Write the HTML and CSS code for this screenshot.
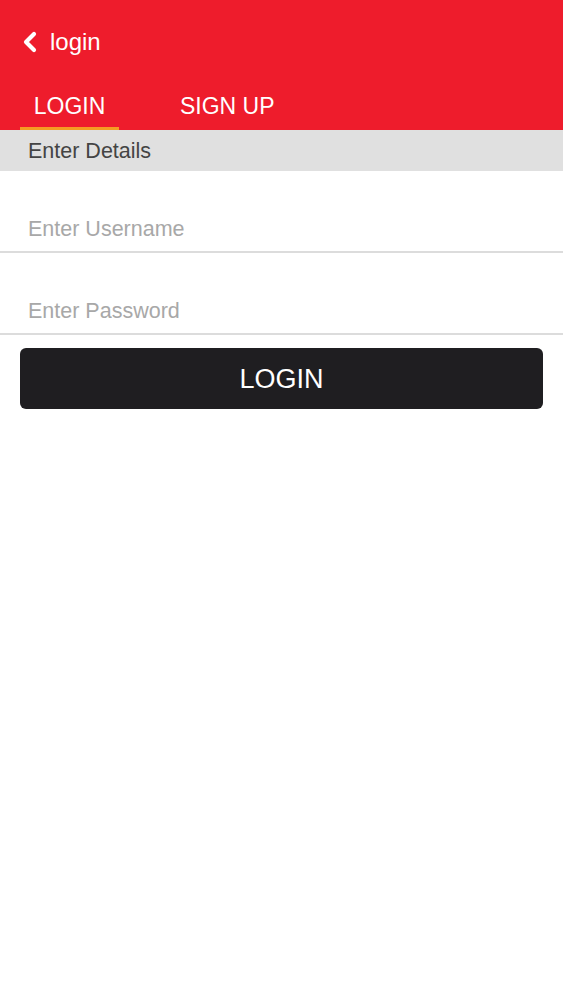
FILE: index.html
```html
<!DOCTYPE html>
<html lang="en">
<head>
    <meta charset="UTF-8">
    <meta name="viewport" content="width=device-width, initial-scale=1.0">
    <title>login</title>
    <link rel="stylesheet" href="styles.css">
</head>
<body>
    <div class="header">
        <div class="topbar">
            <svg class="back" width="16" height="22" viewBox="0 0 16 22">
                <path d="M12 3 L4 11 L12 19" fill="none" stroke="#fff" stroke-width="4.2" stroke-linecap="round" stroke-linejoin="round"/>
            </svg>
            <span class="title">login</span>
        </div>
        <div class="tabs">
            <div class="tab active">LOGIN</div>
            <div class="tab">SIGN UP</div>
        </div>
    </div>

    <div class="section">Enter Details</div>

    <div class="field">
        <input type="text" placeholder="Enter Username">
    </div>
    <div class="field">
        <input type="password" placeholder="Enter Password">
    </div>

    <div class="actions">
        <button class="login-btn">LOGIN</button>
    </div>
</body>
</html>
```

FILE: styles.css
```css
body {
    font-family: "Liberation Sans", Arial, sans-serif;
    background-color: #fff;
    margin: 0;
    padding: 0;
}

.header {
    background-color: #ee1c2c;
    color: #fff;
    height: 130px;
}

.topbar {
    height: 84px;
    display: flex;
    align-items: center;
    padding-left: 22px;
}

.back {
    margin-right: 12px;
}

.title {
    font-size: 24px;
}

.tabs {
    display: flex;
    padding-left: 20px;
    height: 46px;
}

.tab {
    font-size: 23px;
    line-height: 45px;
    height: 43px;
    text-align: center;
    border-bottom: 3px solid transparent;
}

.tab:first-child {
    width: 99px;
}

.tab:last-child {
    margin-left: 61px;
}

.tab.active {
    border-bottom-color: #f59b23;
}

.section {
    background-color: #e0e0e0;
    color: #444;
    font-size: 21.5px;
    height: 41px;
    line-height: 43px;
    padding-left: 28px;
}

.field {
    height: 80px;
    border-bottom: 2px solid #dcdcdc;
    display: flex;
    align-items: flex-end;
}

.field input {
    border: none;
    outline: none;
    width: 100%;
    font-family: inherit;
    font-size: 21.5px;
    padding: 0 28px 4px;
    height: 36px;
    color: #333;
    background: transparent;
}

.field input::placeholder {
    color: #a8a8a8;
}

.actions {
    padding: 13px 20px 0;
}

.login-btn {
    width: 100%;
    height: 61px;
    padding-top: 2px;
    background-color: #1f1e21;
    color: #fff;
    border: none;
    border-radius: 6px;
    font-family: inherit;
    font-size: 27px;
}
```
